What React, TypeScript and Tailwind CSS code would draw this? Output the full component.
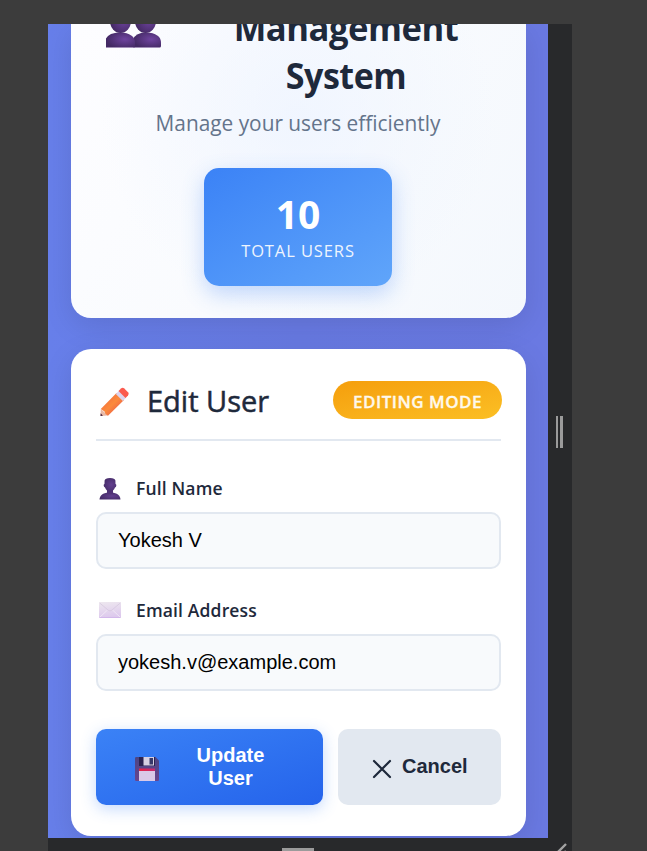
import React from "react";

function Bust({ className, id }: { className: string; id: string }) {
  return (
    <svg viewBox="0 0 22 23" className={className} aria-hidden="true">
      <defs>
        <radialGradient id={id} cx="0.6" cy="0.5" r="0.65">
          <stop offset="0" stopColor="#63408f" />
          <stop offset="1" stopColor="#442b66" />
        </radialGradient>
      </defs>
      <path d="M0.500 22.500C0.800 18 4.500 15.500 11 15.500s10.200 2.500 10.500 7z" fill={`url(#${id})`} />
      <path d="M8 12h6v4.500H8z" fill="#503277" />
      <path d="M5.600 3.500Q6 1 11 1t5.400 2.500L16.500 7q1 .3.800 1.700T16 10.500Q14.500 14.600 11 14.600T6 10.500Q4.900 10 4.700 8.700T5.500 7z" fill={`url(#${id})`} />
    </svg>
  );
}

function People() {
  return (
    <svg viewBox="0 0 56 48" className="h-12 w-14" aria-hidden="true">
      <defs>
        <radialGradient id="pair" cx="0.65" cy="0.45" r="0.65">
          <stop offset="0" stopColor="#6f449f" />
          <stop offset="1" stopColor="#432963" />
        </radialGradient>
      </defs>
      <path d="M27 47.500V40q2-7.500 13-7.500Q55 33 55 43v3q0 1.500-1.500 1.500z" fill="url(#pair)" />
      <ellipse cx="39.500" cy="21" rx="10.500" ry="12" fill="url(#pair)" />
      <path d="M0 47.500V38.500q3-6 14-6Q29 33 29 43v4.500z" fill="url(#pair)" />
      <ellipse cx="14.500" cy="21" rx="10.500" ry="12" fill="url(#pair)" />
      <path d="M0 47.700h54" stroke="#a58bbd" strokeWidth="0.600" />
    </svg>
  );
}

function Pencil() {
  return (
    <svg viewBox="0 0 30 30" className="h-[30px] w-[30px]" aria-hidden="true">
      <defs>
        <linearGradient id="wood" x1="0.2" y1="0.2" x2="0.8" y2="0.8">
          <stop offset="0" stopColor="#f4703f" />
          <stop offset="0.5" stopColor="#fb8a3c" />
          <stop offset="1" stopColor="#ee6048" />
        </linearGradient>
      </defs>
      <path d="M.500 28.900L.800 22 8 28.500z" fill="#e9b9a6" />
      <path d="M.800 22L16.500 6l7.500 7L8 28.700 5.500 27l-1-2.500z" fill="url(#wood)" />
      <path d="M15.800 7l3.500-3.500 7 7-3.500 3.500z" fill="#dcd3ec" />
      <path d="M18.500 4l2.500-2.500q1.700-1.500 3.300 0l3.700 3.700q1.500 1.600 0 3.300L25.500 11z" fill="#fb5a4e" />
      <path d="M.500 28.900l.200-2.600 2.200 2.400z" fill="#49243d" />
    </svg>
  );
}

function Envelope() {
  return (
    <svg viewBox="0 0 22 16" className="h-4 w-[22px]" aria-hidden="true">
      <defs>
        <linearGradient id="paper" x1="0" y1="0" x2="0.2" y2="1">
          <stop offset="0" stopColor="#eee8ef" />
          <stop offset="1" stopColor="#ddc9ed" />
        </linearGradient>
      </defs>
      <rect width="22" height="16" rx="1" fill="url(#paper)" />
      <path d="M1 15l7.500-7M21 15l-7.500-7" stroke="#f3ebf6" strokeWidth="0.800" fill="none" />
      <path d="M.7 1l9 7.500q1.300.8 2.600 0l9-7.500" stroke="#d3c6dc" strokeWidth="0.700" fill="none" />
      <path d="M.5 15.600h21" stroke="#cdb0e8" strokeWidth="0.800" />
    </svg>
  );
}

function Floppy() {
  return (
    <svg viewBox="0 0 24 24" className="h-6 w-6" aria-hidden="true">
      <defs>
        <linearGradient id="shell" x1="0" y1="0" x2="0" y2="1">
          <stop offset="0" stopColor="#4c4583" />
          <stop offset="1" stopColor="#68458e" />
        </linearGradient>
        <linearGradient id="stripe" x1="0" y1="0" x2="1" y2="0">
          <stop offset="0" stopColor="#e62343" />
          <stop offset="1" stopColor="#c52c72" />
        </linearGradient>
      </defs>
      <path d="M1.300 0H20.500L24 3.500V22.700Q24 24 22.700 24H1.300Q0 24 0 22.700V1.300Q0 0 1.300 0z" fill="url(#shell)" />
      <path d="M4 0h16v9H4z" fill="#2c2350" />
      <path d="M8.500 0h10.500v8.500H8.500z" fill="#d7d0e2" />
      <path d="M14.500 1h3.500v6.500h-3.500z" fill="#363869" />
      <path d="M4 11.500h16V15H4z" fill="url(#stripe)" />
      <path d="M4 14h16v10H4z" fill="#dac9e7" />
    </svg>
  );
}

function Field({ icon, label, value }: { icon: React.ReactNode; label: string; value: string }) {
  return (
    <div>
      <div className="flex h-6 items-center pl-[3px]">
        <span className="flex w-[37px] items-center">{icon}</span>
        <label className="text-[17.500px] leading-6 font-semibold tracking-[0.150px] whitespace-nowrap text-[#1e293b]">{label}</label>
      </div>
      <input
        className="mt-3 block h-[57px] w-full rounded-[10px] border-2 border-[#e2e8f0] bg-[#f8fafc] px-5 font-['Liberation_Sans',sans-serif] text-[20px] text-black outline-none"
        defaultValue={value}
        aria-label={label}
      />
    </div>
  );
}

export default function App() {
  return (
    <div className="h-[851px] w-[647px] overflow-hidden bg-[#3c3c3c] pt-6 pl-12 font-['Open_Sans','Noto_Sans',sans-serif]">
      <div className="grid h-[827px] w-[524px] grid-cols-[500px_24px] grid-rows-[814px_13px] bg-[#28292b]">
        <main className="overflow-hidden bg-linear-to-r from-[#677fea] via-[#687ae3] to-[#6a79e2] pr-[22px] pl-[23px]">
          <section className="h-[294px] rounded-b-[20px] bg-[radial-gradient(circle_at_50%_32%,rgba(238,244,255,0.8)_0%,rgba(244,247,254,0)_65%),linear-gradient(120deg,#fdfdff_0%,#f9fbfe_50%,#f4f8fd_100%)] shadow-[0_8px_30px_rgba(0,0,0,0.1)]">
            <div className="flex h-[76px] items-end overflow-hidden">
              <div className="mb-[52px] ml-[35px] w-14 shrink-0"><People /></div>
              <h1 className="ml-[59px] w-[250px] shrink-0 text-center text-[36px] leading-[48px] font-bold text-[#1e293b]">
                <span className="block scale-x-[0.962] tracking-[-0.500px] whitespace-nowrap">Management</span>
                <span className="block scale-x-[0.945] tracking-[-0.500px] whitespace-nowrap">System</span>
              </h1>
            </div>
            <p className="mt-[4.500px] mr-px scale-x-[0.947] text-center text-[22px] leading-[34px] whitespace-nowrap text-[#64748b]">Manage your users efficiently</p>
            <div className="mt-[29.500px] ml-[133px] h-[118px] w-[188px] rounded-[15px] bg-linear-to-br from-[#3b82f6] to-[#60a5fa] pt-[26px] text-center text-white shadow-[0_8px_22px_rgba(59,130,246,0.3)]">
              <div className="text-[39px] leading-10 font-bold">10</div>
              <div className="mt-[5px] text-[16.500px] leading-6 tracking-[0.900px] whitespace-nowrap opacity-90">TOTAL USERS</div>
            </div>
          </section>

          <section className="mt-[31px] h-[487px] rounded-[20px] bg-white px-[25px] pt-8 shadow-[0_8px_30px_rgba(0,0,0,0.1)]">
            <header className="flex h-[60px] items-start border-b-2 border-[#e2e8f0] pl-[4px]">
              <div className="mt-[6px] w-[47px] shrink-0"><Pencil /></div>
              <h2 className="text-[29px] leading-10 font-normal whitespace-nowrap text-[#1e293b] [-webkit-text-stroke:0.5px_#1e293b]">Edit User</h2>
              <span className="-mr-px ml-auto h-[38px] w-[169px] rounded-full bg-linear-to-br from-[#f59e0b] to-[#fbbf24] pt-px text-center text-[17px] leading-10 font-semibold tracking-[0.500px] whitespace-nowrap text-white/90 [-webkit-text-stroke:0.3px]">EDITING MODE</span>
            </header>
            <div className="mt-[35px] flex flex-col gap-[29px]">
              <Field icon={<Bust id="person" className="h-[23px] w-[22px]" />} label="Full Name" value="Yokesh V" />
              <Field icon={<Envelope />} label="Email Address" value="yokesh.v@example.com" />
            </div>
            <div className="mt-[38px] flex gap-[15px] font-['Liberation_Sans',sans-serif] text-[20px] leading-[23px] font-bold">
              <button className="flex h-[76px] w-[227px] items-center rounded-[10px] bg-linear-to-br from-[#3b82f6] to-[#2563eb] pl-[39px] text-white shadow-[0_4px_15px_rgba(59,130,246,0.3)]">
                <span className="mt-[3px]"><Floppy /></span>
                <span className="ml-[31.500px] w-20 text-center">Update User</span>
              </button>
              <button className="flex h-[76px] w-[163px] items-center rounded-[10px] bg-[#e2e8f0] pl-[34px] text-[#1e293b]">
                <svg viewBox="0 0 20 20" className="mt-[3px] h-5 w-5" aria-hidden="true">
                  <path d="M2 2l16 16M18 2L2 18" stroke="#1e293b" strokeWidth="2.200" strokeLinecap="round" />
                </svg>
                <span className="mb-[2px] ml-[10px]">Cancel</span>
              </button>
            </div>
          </section>
        </main>
        <div className="flex items-center justify-center gap-[2px] pt-[2px] pr-px">
          <span className="h-8 w-[2px] bg-[#9b9b9b]" />
          <span className="h-8 w-[3px] bg-[#9b9b9b]" />
        </div>
        <div className="flex items-start justify-center pt-[10px]">
          <span className="h-[3px] w-8 bg-[#9b9b9b]" />
        </div>
        <svg viewBox="0 0 24 13" className="h-[13px] w-6" aria-hidden="true">
          <path d="M9 15L18 6M16 15l2-2" stroke="#a3a3a3" strokeWidth="2.400" fill="none" />
        </svg>
      </div>
    </div>
  );
}
